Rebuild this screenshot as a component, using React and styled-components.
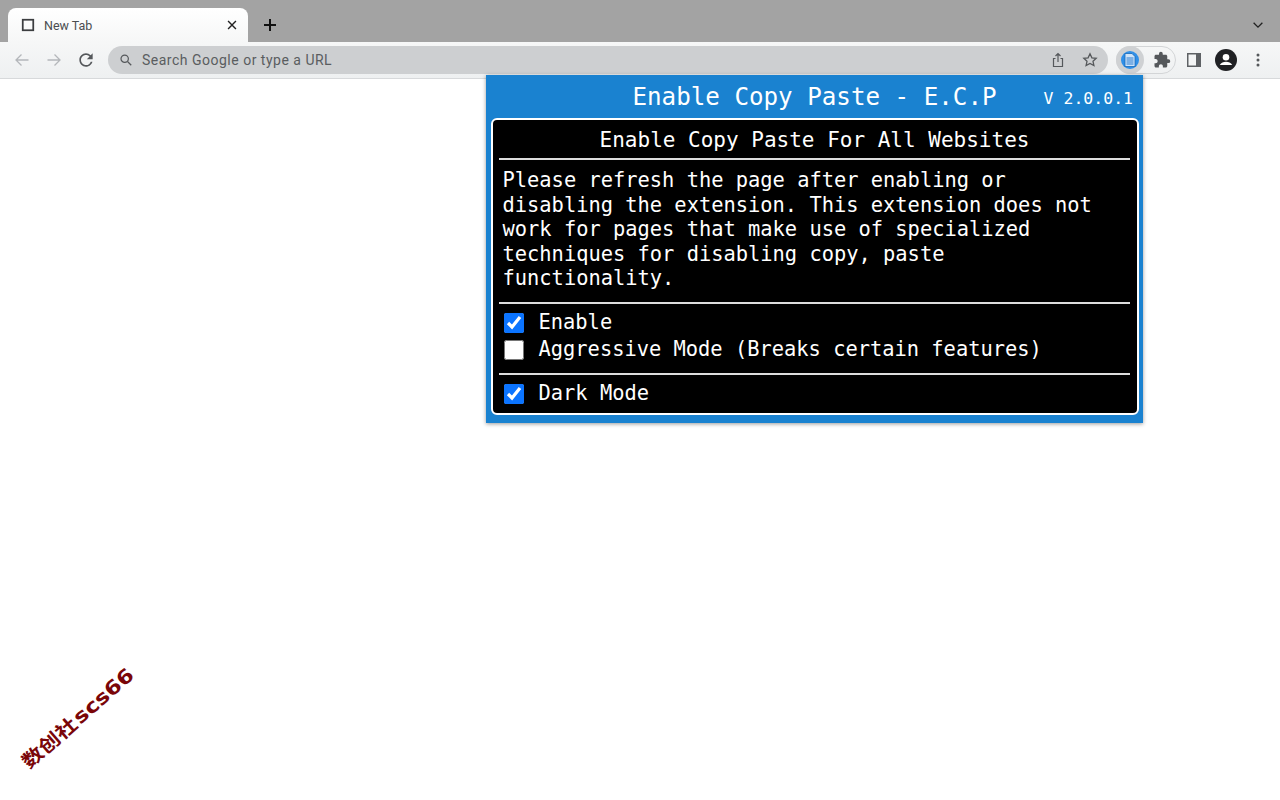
import React from 'react';
import styled, { createGlobalStyle } from 'styled-components';
import { MdExtension, MdRefresh } from 'react-icons/md';

const GlobalStyle = createGlobalStyle`
  html, body { margin: 0; padding: 0; background: #fff; }
  body { width: 1280px; height: 800px; overflow: hidden; position: relative; font-family: Roboto, "Liberation Sans", sans-serif; }
`;

const TabStrip = styled.div`
  height: 42px;
  background: #a3a3a3;
  display: flex;
  align-items: flex-end;
  padding-left: 8px;
  position: relative;
`;

const Tab = styled.div`
  width: 240px;
  height: 34px;
  box-sizing: border-box;
  padding: 0 9px 0 13px;
  display: flex;
  align-items: center;
  background: linear-gradient(#ffffff, #f6f7f7);
  border-radius: 8px 8px 0 0;
  font-size: 12.500px;
  color: #4a4d50;
`;

const TabTitle = styled.span`
  flex: 1;
  margin-left: 9px;
`;

const NewTab = styled.div`
  width: 22px;
  height: 34px;
  margin-left: 11px;
  display: flex;
  align-items: center;
  justify-content: center;
`;

const StripEnd = styled.div`
  margin-left: auto;
  width: 44px;
  height: 34px;
  display: flex;
  align-items: center;
  justify-content: center;
`;

const Toolbar = styled.div`
  height: 37px;
  box-sizing: border-box;
  background: linear-gradient(#f6f7f7, #eef0f1);
  border-bottom: 1px solid #d7d9db;
  display: flex;
  align-items: flex-start;
  padding: 4px 0 0 8px;
`;

const NavButton = styled.div`
  width: 28px;
  height: 28px;
  margin-right: 4px;
  display: flex;
  align-items: center;
  justify-content: center;
`;

const Omnibox = styled.div`
  width: 1000px;
  height: 28px;
  margin-left: 4px;
  box-sizing: border-box;
  padding: 0 2px 0 11px;
  border-radius: 14px;
  background: #cdcfd1;
  display: flex;
  align-items: center;
  font-size: 14px;
  letter-spacing: 0.500px;
  color: #5a5d60;
`;

const OmniText = styled.span`
  flex: 1;
  margin-left: 9px;
`;

const OmniIcon = styled.div`
  width: 32px;
  height: 28px;
  display: flex;
  align-items: center;
  justify-content: center;
`;

const ExtensionPill = styled.div`
  width: 60px;
  height: 28px;
  margin-left: 8px;
  margin-right: 2px;
  box-sizing: border-box;
  border: 1px solid #d3d5d7;
  border-radius: 14px;
  display: flex;
  align-items: center;
`;

const ActiveExtension = styled.div`
  width: 28px;
  height: 28px;
  margin-left: -1px;
  border-radius: 50%;
  background: #cfd1d3;
  display: flex;
  align-items: center;
  justify-content: center;
`;

const PuzzleSlot = styled.div`
  flex: 1;
  padding-left: 4px;
  display: flex;
  align-items: center;
  justify-content: center;
  color: #55585b;
`;

const ToolButton = styled.div`
  width: 32px;
  height: 28px;
  display: flex;
  align-items: center;
  justify-content: center;
`;

const Popup = styled.div`
  position: absolute;
  left: 486px;
  top: 75px;
  width: 657px;
  height: 348px;
  box-sizing: border-box;
  background: #1a82d0;
  box-shadow: 0 1px 4px rgba(0, 0, 0, 0.4);
  padding: 0 4px 8px 5px;
  display: flex;
  flex-direction: column;
  font-family: "DejaVu Sans Mono", monospace;
  color: #fff;
`;

const PopupHeader = styled.div`
  height: 43px;
  flex: none;
  display: flex;
  align-items: center;
`;

const PopupTitle = styled.div`
  margin-left: 141.500px;
  font-size: 24.200px;
  white-space: pre;
`;

const Version = styled.div`
  margin-left: auto;
  margin-right: 6px;
  font-size: 16.500px;
  margin-top: 3px;
`;

const Panel = styled.div`
  flex: 1;
  background: #000;
  border: 2px solid #fff;
  border-radius: 6px;
  padding: 0 7px 0 6px;
`;

const PanelTitle = styled.div`
  height: 38px;
  font-size: 21px;
  line-height: 40px;
  text-align: center;
`;

const Rule = styled.div`
  height: 2px;
  background: #dcdcdc;
`;

const Message = styled.p`
  margin: 0;
  height: 142px;
  box-sizing: border-box;
  padding: 8px 3.500px 0;
  font-size: 20.400px;
  line-height: 24.500px;
  white-space: pre-wrap;
`;

const Options = styled.div`
  padding-top: 5px;
  height: ${(p) => p.$height}px;
  box-sizing: border-box;
`;

const Option = styled.label`
  display: flex;
  align-items: center;
  height: 27px;
  font-size: 20.400px;
  white-space: pre;
`;

const OptionText = styled.span`
  margin-top: -1px;
`;

const Check = styled.input`
  width: 20px;
  height: 20px;
  margin: 0 15px 0 4.500px;
  accent-color: #0b74ff;
`;

const Watermark = styled.div`
  position: absolute;
  left: 5px;
  top: 698px;
  width: 150px;
  display: flex;
  align-items: baseline;
  color: #7a0508;
  white-space: nowrap;
  transform: rotate(-41deg) scale(1, 0.85);
`;

const WatermarkHan = styled.span`
  font-family: "Noto Sans CJK SC", sans-serif;
  font-size: 22px;
  font-weight: 700;
  margin-right: 2px;
`;

const WatermarkLatin = styled.span`
  font-family: "DejaVu Sans", sans-serif;
  font-size: 23px;
  font-weight: 700;
`;

const Glyph = ({ size = 16, fill = 'none', stroke, width = 1.5, children }) => (
  <svg width={size} height={size} viewBox="0 0 16 16" fill={fill} stroke={stroke} strokeWidth={width}>
    {children}
  </svg>
);

export default function App() {
  return (
    <>
      <GlobalStyle />
      <TabStrip>
        <Tab>
          <Glyph size={14} stroke="#3c3e40" width={2}>
            <rect x="2" y="2" width="12" height="12" />
          </Glyph>
          <TabTitle>New Tab</TabTitle>
          <Glyph size={14} stroke="#222" width={1.6}>
            <path d="M3.500 3.500l9 9M12.500 3.500l-9 9" />
          </Glyph>
        </Tab>
        <NewTab>
          <Glyph size={16} stroke="#111" width={2}>
            <path d="M8 2v12M2 8h12" />
          </Glyph>
        </NewTab>
        <StripEnd>
          <Glyph size={14} stroke="#222" width={1.5}>
            <path d="M3 5.500l5 5 5-5" />
          </Glyph>
        </StripEnd>
      </TabStrip>
      <Toolbar>
        <NavButton>
          <Glyph stroke="#b4b7ba" width={1.3}>
            <path d="M14.500 8H2M7.500 2.500L2 8l5.500 5.500" />
          </Glyph>
        </NavButton>
        <NavButton>
          <Glyph stroke="#b4b7ba" width={1.3}>
            <path d="M1.500 8H14M8.500 2.500L14 8l-5.500 5.500" />
          </Glyph>
        </NavButton>
        <NavButton>
          <MdRefresh size={20} color="#55585b" />
        </NavButton>
        <Omnibox>
          <Glyph size={14} stroke="#55585b" width={1.4}>
            <circle cx="6.500" cy="6.500" r="4.200" />
            <path d="M9.700 9.700L14 14" />
          </Glyph>
          <OmniText>Search Google or type a URL</OmniText>
          <OmniIcon>
            <Glyph stroke="#55585b" width={1.2}>
              <path d="M5.500 6.500H3.500v8h9v-8h-2M8 10V1.500M5.500 4L8 1.500 10.500 4" />
            </Glyph>
          </OmniIcon>
          <OmniIcon>
            <Glyph stroke="#55585b" width={1.3}>
              <path d="M8 1.800l1.900 4 4.300.5-3.200 3 .9 4.300L8 11.400l-3.900 2.200.9-4.300-3.200-3 4.300-.5z" />
            </Glyph>
          </OmniIcon>
        </Omnibox>
        <ExtensionPill>
          <ActiveExtension>
            <svg width="20" height="20" viewBox="0 0 20 20">
              <circle cx="10" cy="10" r="9" fill="#2f8fe8" />
              <path d="M5 3.500h7l3 3v10H5z" fill="#cfe3f8" stroke="#1668b8" strokeWidth="0.8" />
              <path d="M6.500 8h7M6.500 10h7M6.500 12h7M6.500 14h7" stroke="#2a7cd0" strokeWidth="1" />
            </svg>
          </ActiveExtension>
          <PuzzleSlot>
            <MdExtension size={18} />
          </PuzzleSlot>
        </ExtensionPill>
        <ToolButton>
          <svg width="14" height="14" viewBox="0 0 14 14">
            <rect x="0" y="0" width="14" height="14" fill="#5f6265" />
            <rect x="1.500" y="1.500" width="7.500" height="11" fill="#f4f5f5" />
          </svg>
        </ToolButton>
        <ToolButton>
          <svg width="22" height="22" viewBox="0 0 22 22">
            <circle cx="11" cy="11" r="11" fill="#202124" />
            <circle cx="11" cy="8.300" r="3.300" fill="#fff" />
            <path d="M4.800 16c1.200-2.400 3.700-3.300 6.200-3.300s5 .9 6.200 3.300z" fill="#fff" />
          </svg>
        </ToolButton>
        <ToolButton>
          <svg width="4" height="14" viewBox="0 0 4 14" fill="#55585b">
            <circle cx="2" cy="2" r="1.500" />
            <circle cx="2" cy="7" r="1.500" />
            <circle cx="2" cy="12" r="1.500" />
          </svg>
        </ToolButton>
      </Toolbar>

      <Popup>
        <PopupHeader>
          <PopupTitle>Enable Copy Paste - E.C.P</PopupTitle>
          <Version>V 2.0.0.1</Version>
        </PopupHeader>
        <Panel>
          <PanelTitle>Enable Copy Paste For All Websites</PanelTitle>
          <Rule />
          <Message>
            {'Please refresh the page after enabling or\ndisabling the extension. This extension does not\nwork for pages that make use of specialized\ntechniques for disabling copy, paste\nfunctionality.'}
          </Message>
          <Rule />
          <Options $height={69}>
            <Option>
              <Check type="checkbox" defaultChecked />
              <OptionText>Enable</OptionText>
            </Option>
            <Option>
              <Check type="checkbox" />
              <OptionText>Aggressive Mode (Breaks certain features)</OptionText>
            </Option>
          </Options>
          <Rule />
          <Options $height={38}>
            <Option>
              <Check type="checkbox" defaultChecked />
              <OptionText>Dark Mode</OptionText>
            </Option>
          </Options>
        </Panel>
      </Popup>

      <Watermark>
        <WatermarkHan>数创社</WatermarkHan>
        <WatermarkLatin>scs66</WatermarkLatin>
      </Watermark>
    </>
  );
}
